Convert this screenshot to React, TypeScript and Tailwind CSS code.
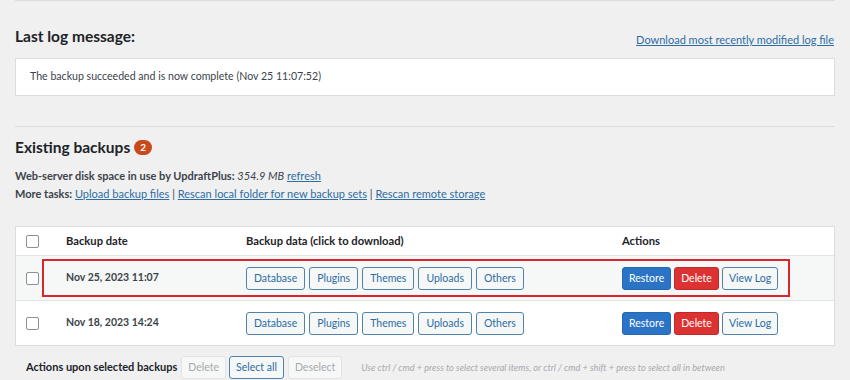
import React from "react";

const DATA_ITEMS = ["Database", "Plugins", "Themes", "Uploads", "Others"];

const BACKUPS = [
  { date: "Nov 25, 2023 11:07", highlight: true },
  { date: "Nov 18, 2023 14:24", highlight: false },
];

const outlineBtn =
  "h-[23px] px-[6px] text-[10.5px] text-[#2c6da3] bg-[#f6f7f7] border border-[#4f83ad] rounded-[3px] leading-none";
const disabledBtn =
  "h-[23px] px-[6px] text-[10.5px] text-[#a7aaad] bg-[#f6f7f7] border border-[#e2e4e7] rounded-[3px] leading-none";

function Checkbox() {
  return <span className="block w-[13px] h-[13px] border border-[#8c8f94] bg-white rounded-[2px]" />;
}

function BackupRow({ date, highlight }: { date: string; highlight: boolean }) {
  return (
    <div className={`relative flex items-center h-[45px] border-t border-[#e2e4e7] ${highlight ? "bg-[#f6f7f7]" : "bg-white"}`}>
      <div className="w-[50px] pl-[10px] flex">
        <Checkbox />
      </div>
      <div className="w-[180px] text-[10.5px] font-bold text-[#3c434a]">{date}</div>
      <div className="w-[376px] flex gap-[4px]">
        {DATA_ITEMS.map((d) => (
          <button
            key={d}
            className="h-[23px] px-[7px] text-[10.5px] text-[#2c6da3] bg-[#f6f7f7] border border-[#4f83ad] rounded-[3px] leading-none"
          >
            {d}
          </button>
        ))}
      </div>
      <div className="flex gap-[3px]">
        <button className="h-[23px] px-[6px] text-[10.5px] text-white bg-[#2b74c5] border border-[#2567b3] rounded-[3px] leading-none">
          Restore
        </button>
        <button className="h-[23px] px-[6px] text-[10.5px] text-white bg-[#dc3232] border border-[#c22a2a] rounded-[3px] leading-none">
          Delete
        </button>
        <button className={outlineBtn}>View Log</button>
      </div>
      {highlight && (
        <div className="absolute left-[26px] top-[3px] w-[748px] h-[38px] border-2 border-[#d9252b] pointer-events-none" />
      )}
    </div>
  );
}

export default function App() {
  return (
    <div
      className="w-[850px] h-[380px] overflow-hidden bg-[#f0f0f1] text-[#3c434a]"
      style={{ fontFamily: 'Lato, "Open Sans", sans-serif' }}
    >
      <div className="w-[835px] pl-[15px]">
        <div className="h-px bg-[#dcdcde]" />

        {/* Last log message */}
        <div className="flex items-end justify-between mt-[28px]">
          <h2 className="text-[15.5px] font-bold text-[#1d2327] leading-none">Last log message:</h2>
          <a className="text-[11px] text-[#2c6da3] underline leading-none pr-[1px]">
            Download most recently modified log file
          </a>
        </div>
        <div className="mt-[13px] h-[38px] bg-white border border-[#dcdcde] flex items-center pl-[14px] text-[10.6px]">
          The backup succeeded and is now complete (Nov 25 11:07:52)
        </div>

        <div className="mt-[30px] h-px bg-[#dcdcde]" />

        {/* Existing backups */}
        <div className="flex items-center mt-[13px]">
          <h2 className="text-[15.5px] font-bold text-[#1d2327] leading-none">Existing backups</h2>
          <span className="ml-[4px] h-[15px] min-w-[18px] px-[5px] rounded-full bg-[#c9491c] text-white text-[10px] font-bold flex items-center justify-center leading-none">
            2
          </span>
        </div>
        <div className="mt-[12px] text-[11px] leading-[18px]">
          <div>
            <span className="font-bold">Web-server disk space in use by UpdraftPlus:</span>{" "}
            <span className="italic">354.9 MB</span>{" "}
            <a className="text-[#2c6da3] underline">refresh</a>
          </div>
          <div>
            <span className="font-bold">More tasks:</span>{" "}
            <a className="text-[#2c6da3] underline">Upload backup files</a> |{" "}
            <a className="text-[#2c6da3] underline">Rescan local folder for new backup sets</a> |{" "}
            <a className="text-[#2c6da3] underline">Rescan remote storage</a>
          </div>
        </div>

        {/* Table */}
        <div className="mt-[23px] bg-white border border-[#dcdcde]">
          <div className="flex items-center h-[28px] text-[11.2px] font-bold text-[#1d2327]">
            <div className="w-[50px] pl-[10px] flex">
              <Checkbox />
            </div>
            <div className="w-[180px]">Backup date</div>
            <div className="w-[376px]">Backup data (click to download)</div>
            <div>Actions</div>
          </div>
          {BACKUPS.map((b) => (
            <BackupRow key={b.date} date={b.date} highlight={b.highlight} />
          ))}
        </div>

        {/* Bulk actions */}
        <div className="flex items-center mt-[10px] pl-[11px]">
          <span className="text-[11px] font-bold text-[#1d2327] mr-[4px]">Actions upon selected backups</span>
          <button className={disabledBtn}>Delete</button>
          <button className={`ml-[3px] ${outlineBtn}`}>Select all</button>
          <button className={`ml-[4px] ${disabledBtn}`}>Deselect</button>
          <span className="ml-[19px] text-[9.2px] italic text-[#a7aaad]">
            Use ctrl / cmd + press to select several items, or ctrl / cmd + shift + press to select all in between
          </span>
        </div>
      </div>
    </div>
  );
}
